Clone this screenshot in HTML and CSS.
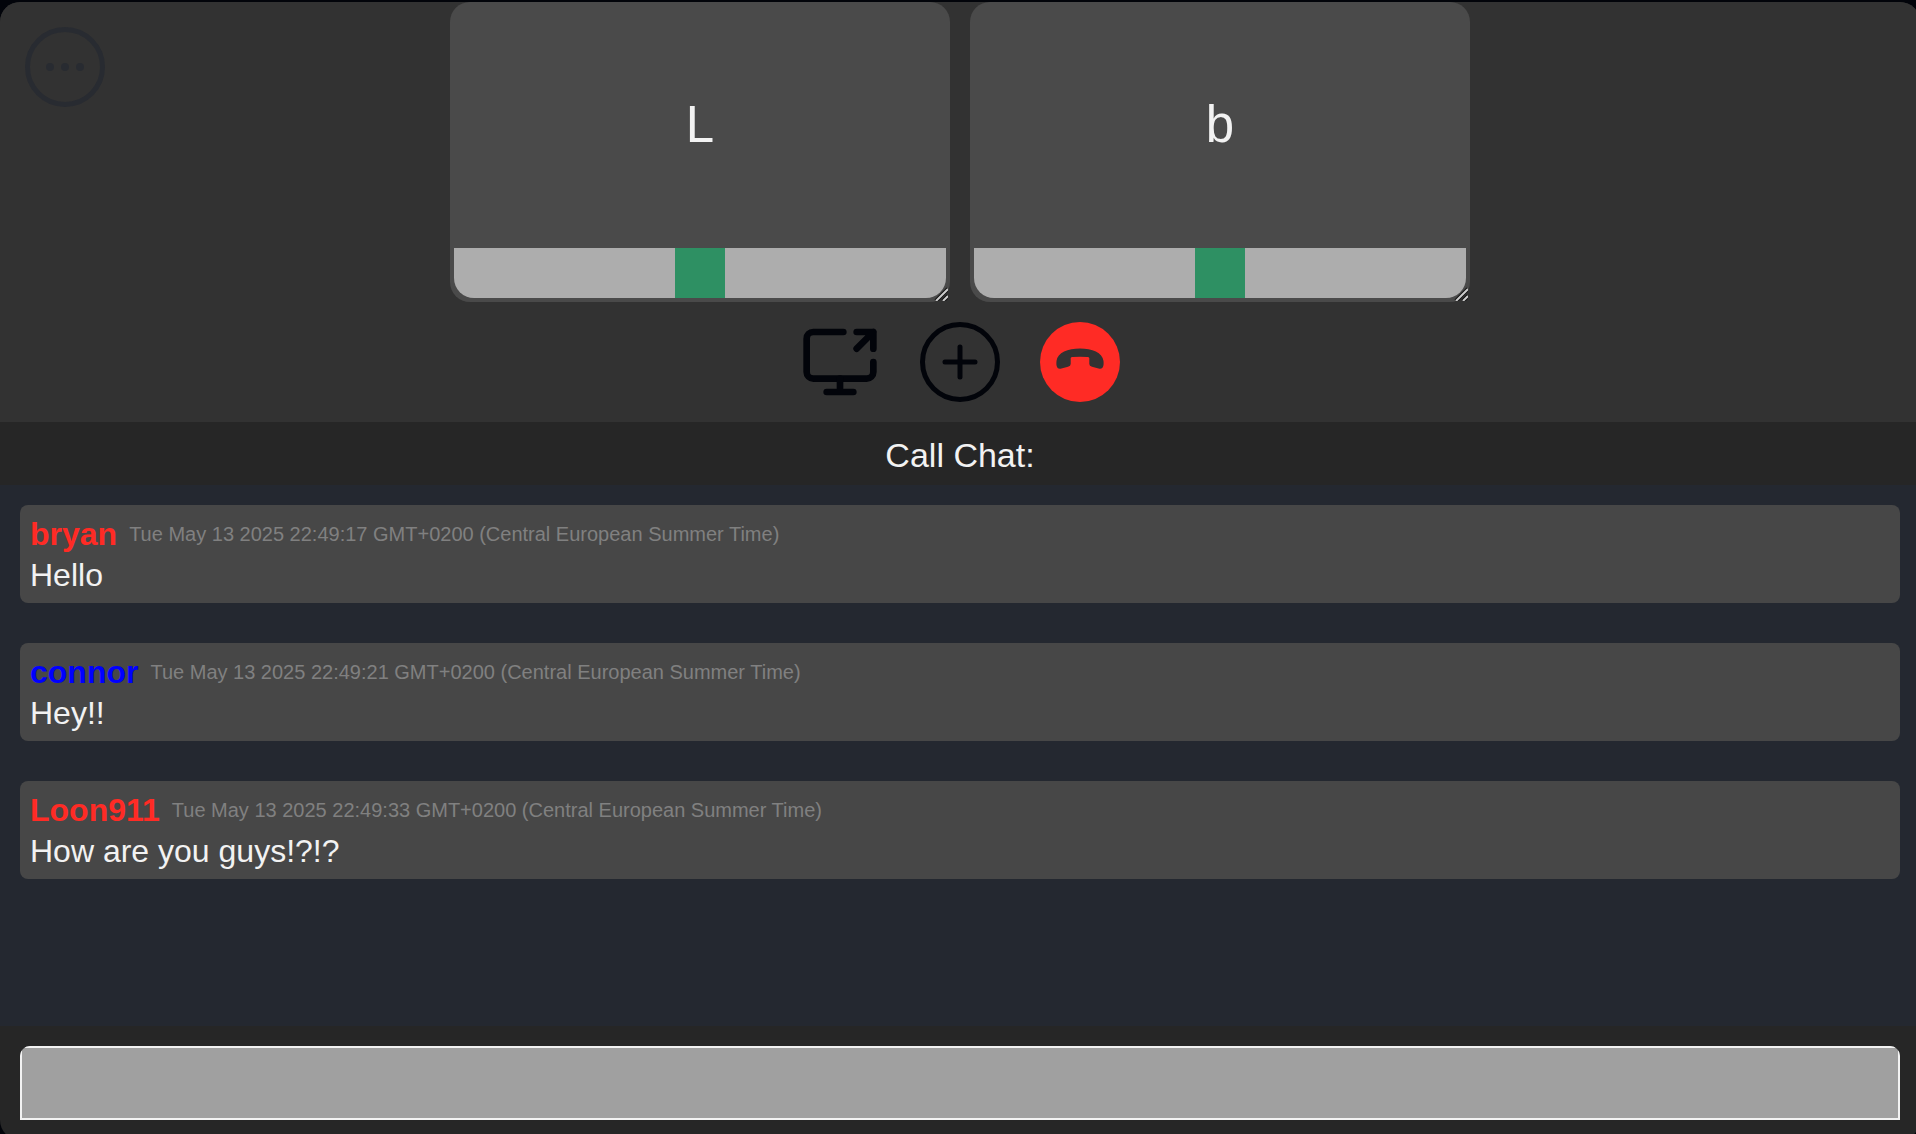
FILE: index.html
```
<!DOCTYPE html>
<html lang="en">
<head>
  <meta charset="utf-8">
  <title>Call</title>
  <meta name="viewport" content="width=device-width, initial-scale=1">
  <link rel="stylesheet" href="styles.css">
</head>
<body>

  <div class="app">
    <section class="call">
      <button class="icon-btn menu-btn" aria-label="More options">
        <svg viewBox="0 0 80 80">
          <circle cx="40" cy="40" r="37.5" fill="none" stroke="currentColor" stroke-width="5"/>
          <circle cx="25" cy="40" r="4" fill="currentColor"/>
          <circle cx="40" cy="40" r="4" fill="currentColor"/>
          <circle cx="55" cy="40" r="4" fill="currentColor"/>
        </svg>
      </button>

      <div class="users">
        <div class="user">
          <div class="user-letter">L</div>
          <div class="user-bar"><div class="volume"></div></div>
          <svg class="grip" viewBox="0 0 14 14">
            <path d="M2 14L14 2M9 14L14 9" stroke="#111" stroke-width="4"/>
            <path d="M2 14L14 2M9 14L14 9" stroke="#ccc" stroke-width="2"/>
          </svg>
        </div>
        <div class="user">
          <div class="user-letter">b</div>
          <div class="user-bar"><div class="volume"></div></div>
          <svg class="grip" viewBox="0 0 14 14">
            <path d="M2 14L14 2M9 14L14 9" stroke="#111" stroke-width="4"/>
            <path d="M2 14L14 2M9 14L14 9" stroke="#ccc" stroke-width="2"/>
          </svg>
        </div>
      </div>

      <div class="controls">
        <button class="icon-btn" aria-label="Share screen">
          <svg viewBox="0 0 24 24" fill="none" stroke="currentColor" stroke-width="2" stroke-linecap="round" stroke-linejoin="round">
            <path d="M13 3H4a2 2 0 0 0-2 2v10a2 2 0 0 0 2 2h16a2 2 0 0 0 2-2v-3"/>
            <path d="M17 3h5v5M17 8l5-5M12 17v4M8 21h8"/>
          </svg>
        </button>
        <button class="icon-btn" aria-label="Add user">
          <svg viewBox="0 0 80 80" fill="none" stroke="currentColor" stroke-width="5" stroke-linecap="round">
            <circle cx="40" cy="40" r="37.5"/>
            <path d="M40 25v30M25 40h30"/>
          </svg>
        </button>
        <button class="icon-btn hangup-btn" aria-label="Leave call">
          <svg viewBox="0 0 80 80">
            <circle cx="40" cy="40" r="40" fill="#ff2b25"/>
            <path d="M16.500 39C17.500 30.500 28 26.500 40 26.500S62.500 30.500 63.500 39C64 44 63 47.200 59.500 46.700L52 44.800Q49.300 44 49.300 42V36Q49 35 47.500 35Q40 34.500 32.500 35Q31 35 30.700 36V42Q30.700 44 28 44.800L20.500 46.700C17 47.200 16 44 16.500 39z" fill="#323232"/>
          </svg>
        </button>
      </div>
    </section>

    <h1 class="chat-title">Call Chat:</h1>

    <div class="messages">
      <div class="message">
        <div class="message-head">
          <span class="name red">bryan</span>
          <span class="date">Tue May 13 2025 22:49:17 GMT+0200 (Central European Summer Time)</span>
        </div>
        <p class="message-text">Hello</p>
      </div>
      <div class="message">
        <div class="message-head">
          <span class="name blue">connor</span>
          <span class="date">Tue May 13 2025 22:49:21 GMT+0200 (Central European Summer Time)</span>
        </div>
        <p class="message-text">Hey!!</p>
      </div>
      <div class="message">
        <div class="message-head">
          <span class="name red">Loon911</span>
          <span class="date">Tue May 13 2025 22:49:33 GMT+0200 (Central European Summer Time)</span>
        </div>
        <p class="message-text">How are you guys!?!?</p>
      </div>
    </div>

    <form class="chat-form">
      <div class="input-wrap">
        <input class="chat-input" type="text" aria-label="Message">
      </div>
    </form>
  </div>

</body>
</html>
```
FILE: styles.css
```
* {
  box-sizing: border-box;
}
body {
  margin: 0;
  padding-top: 2px;
  height: 100vh;
  background: #02040a;
  color: #f2f2f2;
  font-family: Helvetica, "Liberation Sans", Arial, sans-serif;
  font-size: 32px;
  overflow: hidden;
}
.app {
  display: flex;
  flex-direction: column;
  height: calc(100vh + 4px);
  margin-right: -4px;
  background: #262626;
  border-radius: 20px;
  overflow: hidden;
}

/* call */
.call {
  position: relative;
  background: #323232;
}
.users {
  display: flex;
  justify-content: center;
  gap: 20px;
}
.user {
  position: relative;
  display: flex;
  flex-direction: column;
  width: 500px;
  height: 300px;
  padding: 4px;
  background: #4a4a4a;
  border-radius: 20px;
}
.user-letter {
  flex: 1;
  display: flex;
  align-items: center;
  justify-content: center;
  padding-bottom: 6px;
  font-size: 51px;
}
.user-bar {
  display: flex;
  justify-content: center;
  height: 50px;
  background: #adadad;
  border-radius: 0 0 20px 20px;
}
.volume {
  width: 50px;
  background: #2e9063;
}
.grip {
  position: absolute;
  right: 2px;
  bottom: 1px;
  width: 14px;
  height: 14px;
}
.controls {
  display: flex;
  justify-content: center;
  gap: 40px;
  padding: 20px;
}
.icon-btn {
  width: 80px;
  height: 80px;
  padding: 0;
  background: none;
  border: none;
  border-radius: 50%;
  color: #02040a;
  cursor: pointer;
}
.icon-btn svg {
  display: block;
  width: 100%;
  height: 100%;
}
.menu-btn {
  position: absolute;
  top: 25px;
  left: 25px;
  color: #282b31;
}

/* chat */
.chat-title {
  margin: 0;
  padding: 14px 12px 10px;
  font-size: 34px;
  font-weight: normal;
  line-height: 39px;
  text-align: center;
}
.messages {
  flex: 1;
  display: flex;
  flex-direction: column;
  gap: 40px;
  padding: 20px;
  background: #242830;
  overflow: hidden;
}
.message {
  padding: 10px 10px 6px;
  background: #474747;
  border-radius: 8px;
}
.message-head {
  display: flex;
  align-items: center;
  gap: 12px;
  line-height: 38px;
}
.name {
  font-weight: bold;
}
.red {
  color: #ff2b25;
}
.blue {
  color: #0000ff;
}
.date {
  color: #808080;
  font-size: 20px;
  line-height: 24px;
}
.message-text {
  margin: 0;
  line-height: 44px;
}
.chat-form {
  padding: 20px;
}
.input-wrap {
  border-radius: 10px 10px 0 0;
  overflow: hidden;
}
.chat-input {
  display: block;
  width: 100%;
  height: 74px;
  padding: 0 10px;
  background: #a0a0a0;
  border: 2px solid #f2f2f2;
  border-radius: 0;
  color: #02040a;
  font: inherit;
  outline: none;
}
```
